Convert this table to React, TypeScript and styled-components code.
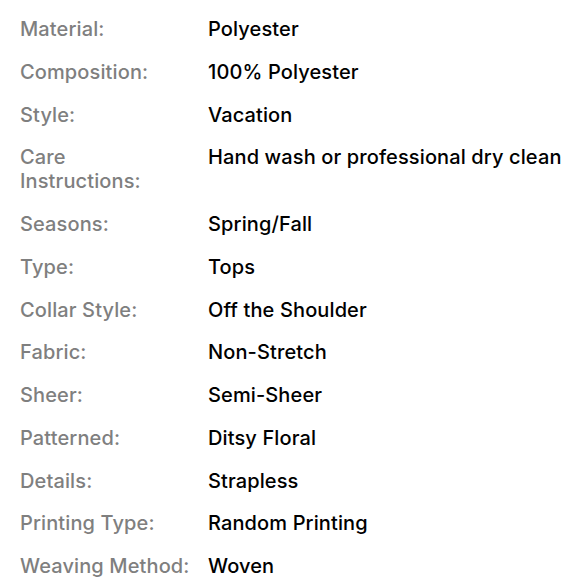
import React from "react";
import styled, { createGlobalStyle } from "styled-components";

const GlobalStyle = createGlobalStyle`
  html, body {
    margin: 0;
    padding: 0;
    background: #fff;
  }
`;

const SpecList = styled.dl`
  margin: 0;
  padding: 17px 0 17px 20px;
  display: grid;
  grid-template-columns: 188px 1fr;
  row-gap: 18.75px;
  font-family: Inter, "Noto Sans", sans-serif;
  font-size: 20px;
  line-height: 24px;
  font-weight: 500;
  letter-spacing: 0.12px;
`;

const Label = styled.dt`
  margin: 0;
  color: #7f7f7f;
  white-space: pre-line;
`;

const Value = styled.dd`
  margin: 0;
  color: #000;
  white-space: nowrap;
`;

const specs: [string, string][] = [
  ["Material:", "Polyester"],
  ["Composition:", "100% Polyester"],
  ["Style:", "Vacation"],
  ["Care\nInstructions:", "Hand wash or professional dry clean"],
  ["Seasons:", "Spring/Fall"],
  ["Type:", "Tops"],
  ["Collar Style:", "Off the Shoulder"],
  ["Fabric:", "Non-Stretch"],
  ["Sheer:", "Semi-Sheer"],
  ["Patterned:", "Ditsy Floral"],
  ["Details:", "Strapless"],
  ["Printing Type:", "Random Printing"],
  ["Weaving Method:", "Woven"],
];

const App: React.FC = () => (
  <>
    <GlobalStyle />
    <SpecList>
      {specs.map(([label, value]) => (
        <React.Fragment key={label}>
          <Label>{label}</Label>
          <Value>{value}</Value>
        </React.Fragment>
      ))}
    </SpecList>
  </>
);

export default App;
